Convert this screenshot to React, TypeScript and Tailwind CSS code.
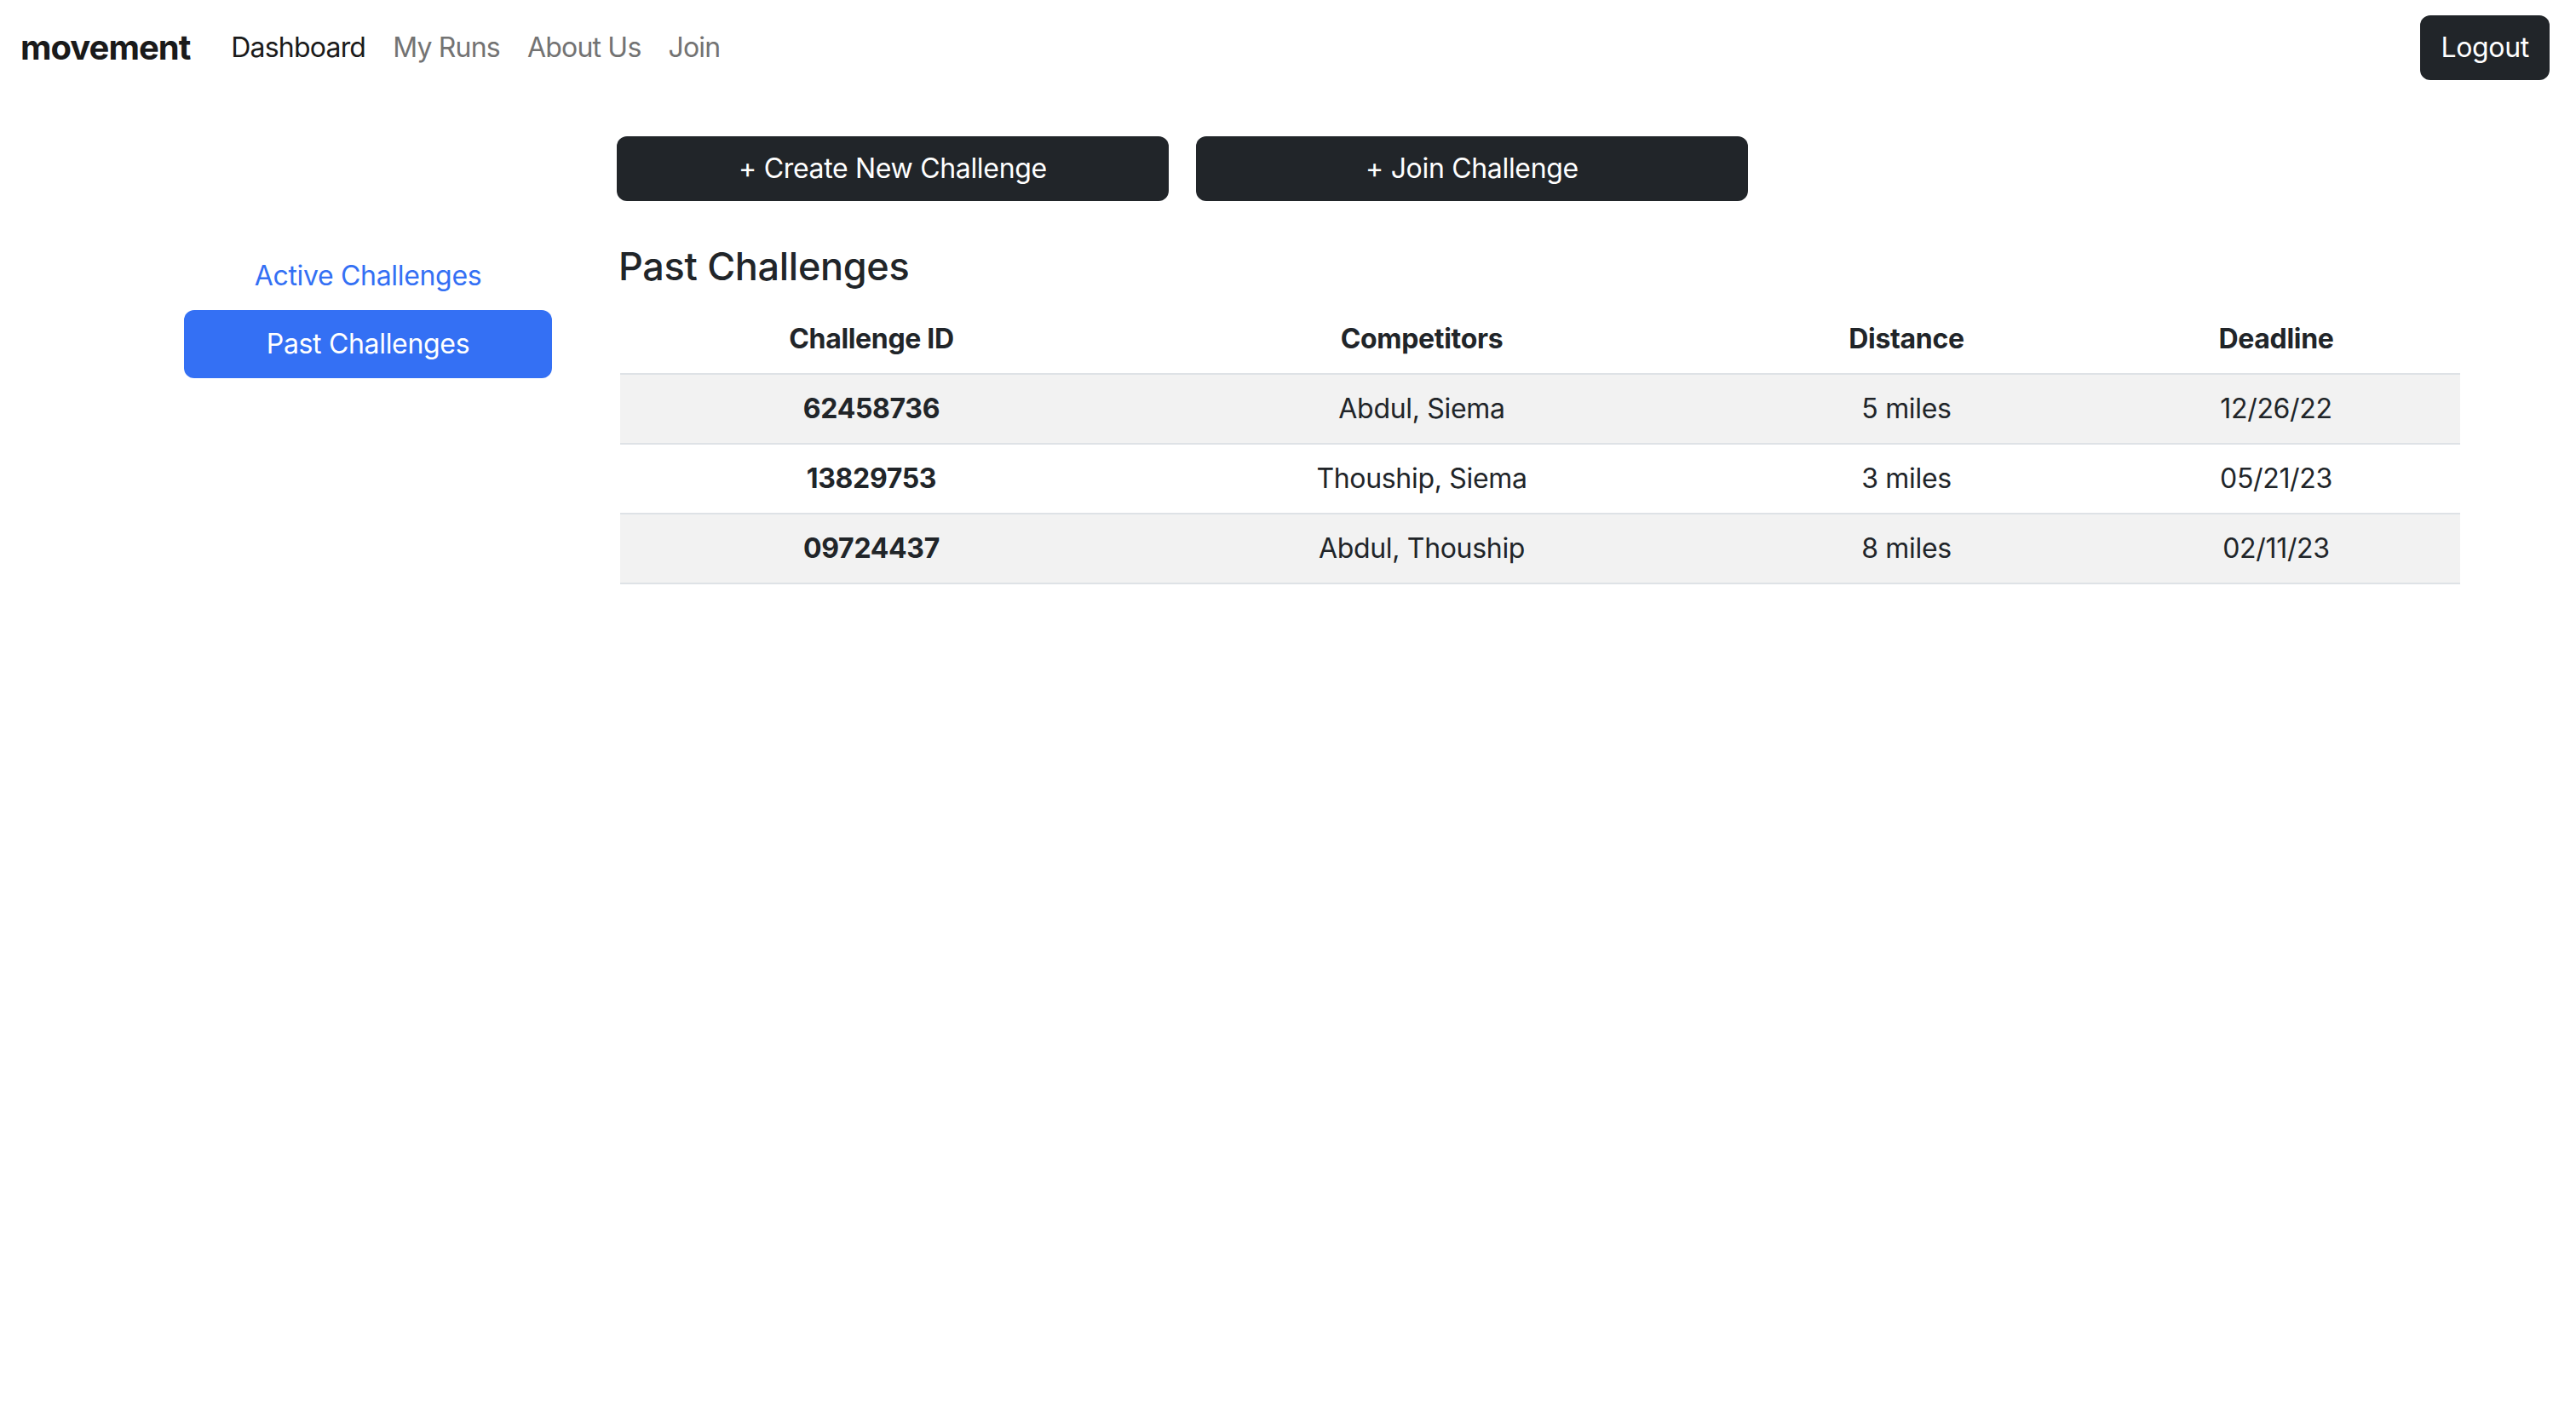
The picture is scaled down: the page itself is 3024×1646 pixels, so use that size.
import { useState } from "react"

const navLinks = ["Dashboard", "My Runs", "About Us", "Join"]

const challenges = [
  { id: "62458736", competitors: "Abdul, Siema", distance: "5 miles", deadline: "12/26/22" },
  { id: "13829753", competitors: "Thouship, Siema", distance: "3 miles", deadline: "05/21/23" },
  { id: "09724437", competitors: "Abdul, Thouship", distance: "8 miles", deadline: "02/11/23" },
]

export default function App() {
  const [tab, setTab] = useState<"active" | "past">("past")

  return (
    <div className="min-h-screen bg-white text-[#212529] tracking-[-0.02em] font-['Inter','Noto_Sans',sans-serif]">
      {/* Navbar */}
      <nav className="h-[112px] flex items-center justify-between pl-6 pr-[31px]">
        <div className="flex items-center">
          <a href="#" className="text-[40px] font-bold leading-[60px] text-[#1a1a1a] mr-8 tracking-[-1px]">
            movement
          </a>
          <ul className="flex items-center">
            {navLinks.map((link, i) => (
              <li key={link}>
                <a
                  href="#"
                  className={`block px-4 py-2 text-[32px] leading-[48px] tracking-[-0.025em] ${
                    i === 0 ? "text-[#1a1a1a]" : "text-[#737373]"
                  }`}
                >
                  {link}
                </a>
              </li>
            ))}
          </ul>
        </div>
        <button className="h-[76px] px-6 rounded-xl bg-[#212529] text-white text-[32px] leading-[48px]">
          Logout
        </button>
      </nav>

      {/* Page body */}
      <div className="grid grid-cols-[728px_1fr] gap-y-12 pt-12 pr-[136px]">
        <div />
        <div className="flex gap-8 -ml-1">
          <button className="w-[648px] h-[76px] rounded-xl bg-[#212529] text-white text-[32px] leading-[48px]">
            + Create New Challenge
          </button>
          <button className="w-[648px] h-[76px] rounded-xl bg-[#212529] text-white text-[32px] leading-[48px]">
            + Join Challenge
          </button>
        </div>

        {/* Sidebar */}
        <div>
          <div className="ml-[216px] w-[432px] flex flex-col">
            <button
              onClick={() => setTab("active")}
              className={`h-[80px] rounded-xl text-[32px] leading-[48px] ${
                tab === "active" ? "bg-[#3470f4] text-white" : "text-[#3470f4]"
              }`}
            >
              Active Challenges
            </button>
            <button
              onClick={() => setTab("past")}
              className={`h-[80px] rounded-xl text-[32px] leading-[48px] ${
                tab === "past" ? "bg-[#3470f4] text-white" : "text-[#3470f4]"
              }`}
            >
              Past Challenges
            </button>
          </div>
        </div>

        {/* Table */}
        <div>
          <h4 className="text-[45px] font-medium leading-[58px] mb-4 -ml-[2px]">Past Challenges</h4>
          <table className="w-full table-fixed text-[32px] leading-[48px] text-center">
            <colgroup>
              <col className="w-[590px]" />
              <col className="w-[702px]" />
              <col className="w-[436px]" />
              <col className="w-[432px]" />
            </colgroup>
            <thead>
              <tr className="border-b-2 border-[#dee2e6]">
                <th className="p-4 font-bold">Challenge ID</th>
                <th className="p-4 font-bold">Competitors</th>
                <th className="p-4 font-bold">Distance</th>
                <th className="p-4 font-bold">Deadline</th>
              </tr>
            </thead>
            <tbody>
              {challenges.map((c, i) => (
                <tr
                  key={c.id}
                  className={`border-b-2 border-[#dee2e6] ${i % 2 === 0 ? "bg-[#f2f2f2]" : "bg-white"}`}
                >
                  <th className="p-4 font-bold">{c.id}</th>
                  <td className="p-4">{c.competitors}</td>
                  <td className="p-4">{c.distance}</td>
                  <td className="p-4">{c.deadline}</td>
                </tr>
              ))}
            </tbody>
          </table>
        </div>
      </div>
    </div>
  )
}
